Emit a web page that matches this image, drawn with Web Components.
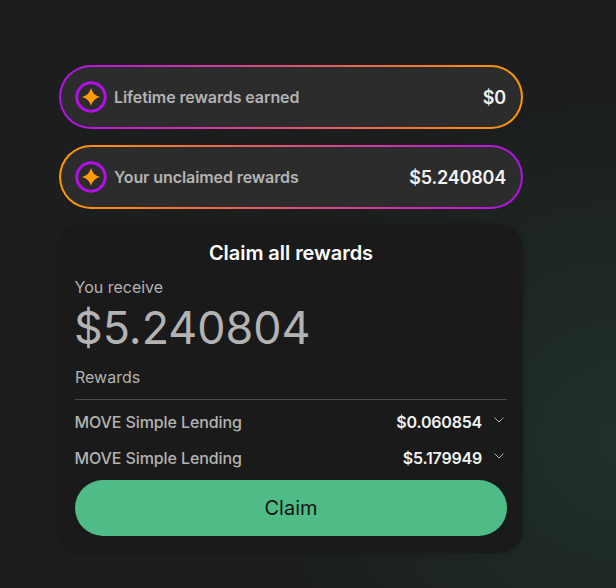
<!DOCTYPE html>
<html lang="en">
<head>
<meta charset="utf-8">
<title>Rewards</title>
<style>
  html, body { margin: 0; height: 100%; }
  body {
    min-height: 588px;
    overflow: hidden;
    font-family: Inter, "Liberation Sans", sans-serif;
    background:
      radial-gradient(circle at 100% 75%, #20302a 0, rgba(32,48,42,0) 45%),
      #1b1e1d;
  }
  rewards-page { padding: 65px 0 0 59px; }
</style>
</head>
<body>
<rewards-page>
  <reward-pill label="Lifetime rewards earned" value="$0" flip></reward-pill>
  <reward-pill label="Your unclaimed rewards" value="$5.240804"></reward-pill>
  <claim-card title="Claim all rewards" amount="$5.240804">
    <reward-row name="MOVE Simple Lending" value="$0.060854"></reward-row>
    <reward-row name="MOVE Simple Lending" value="$5.179949"></reward-row>
  </claim-card>
</rewards-page>

<script>
const pageTemplate = document.createElement('template');
pageTemplate.innerHTML = `
<style>
  :host { display: flex; flex-direction: column; gap: 16px; width: 464px; }
</style>
<slot></slot>`;

class RewardsPage extends HTMLElement {
  connectedCallback() {
    this.attachShadow({ mode: 'open' }).appendChild(pageTemplate.content.cloneNode(true));
  }
}

const pillTemplate = document.createElement('template');
pillTemplate.innerHTML = `
<style>
  :host {
    --a: #ff9900;
    --b: #b30fea;
    display: flex;
    align-items: center;
    box-sizing: border-box;
    height: 64px;
    padding: 0 15px 0 14px;
    gap: 7px;
    border: 2px solid transparent;
    border-radius: 32px;
    background:
      linear-gradient(#2c2c2c, #2c2c2c) padding-box,
      linear-gradient(90deg, var(--a), var(--b)) border-box;
  }
  :host([flip]) { --a: #b30fea; --b: #ff9900; }
  svg { width: 32px; height: 32px; flex: none; }
  .label { flex: 1; font-size: 16px; font-weight: 600; letter-spacing: -.09px; color: #b3b3b3; }
  .value { font-size: 18px; font-weight: 600; letter-spacing: -.2px; color: #f2f2f2; }
</style>
<svg viewBox="0 0 32 32" fill="none">
  <circle cx="16" cy="16" r="14.2" stroke="#b30fea" stroke-width="3"/>
  <path d="M16 7Q17.8 14.2 25 16Q17.8 17.8 16 25Q14.2 17.8 7 16Q14.2 14.2 16 7Z" fill="#ff9900"/>
</svg>
<span class="label"></span>
<span class="value"></span>`;

class RewardPill extends HTMLElement {
  connectedCallback() {
    const root = this.attachShadow({ mode: 'open' });
    root.appendChild(pillTemplate.content.cloneNode(true));
    root.querySelector('.label').textContent = this.getAttribute('label');
    root.querySelector('.value').textContent = this.getAttribute('value');
  }
}

const cardTemplate = document.createElement('template');
cardTemplate.innerHTML = `
<style>
  :host {
    display: flex;
    flex-direction: column;
    box-sizing: border-box;
    height: 328px;
    padding: 16px;
    border-radius: 24px;
    background: #1a1a1a;
    box-shadow: 0 0 6px rgba(0,0,0,.2);
    color: #b3b3b3;
  }
  h2 {
    margin: 0;
    height: 24px;
    line-height: 24px;
    font-size: 20px;
    font-weight: 600;
    letter-spacing: -.05px;
    text-align: center;
    color: #fff;
  }
  .small { font-size: 16px; line-height: 20px; margin-left: -.5px; }
  .receive { margin-top: 12px; }
  .amount { font-size: 44.8px; line-height: 56px; margin: 3px 0 0 -1px; color: #b3b3b3; }
  .rewards { margin-top: 11px; padding-bottom: 12px; border-bottom: 1px solid #4a4a4a; margin-left: 0; }
  .list { display: flex; flex-direction: column; margin-top: 4px; }
  button {
    margin-top: 4px;
    height: 56px;
    border: 0;
    border-radius: 28px;
    background: #4fbb87;
    color: #141414;
    font: 400 20px Inter, "Liberation Sans", sans-serif;
  }
</style>
<h2></h2>
<div class="small receive">You receive</div>
<div class="amount"></div>
<div class="small rewards">Rewards</div>
<div class="list"><slot></slot></div>
<button type="button">Claim</button>`;

class ClaimCard extends HTMLElement {
  connectedCallback() {
    const root = this.attachShadow({ mode: 'open' });
    root.appendChild(cardTemplate.content.cloneNode(true));
    root.querySelector('h2').textContent = this.getAttribute('title');
    root.querySelector('.amount').textContent = this.getAttribute('amount');
  }
}

const rowTemplate = document.createElement('template');
rowTemplate.innerHTML = `
<style>
  :host {
    display: flex;
    align-items: center;
    height: 36px;
    font-size: 16px;
    color: #b3b3b3;
  }
  .name { flex: 1; font-weight: 500; letter-spacing: -.1px; margin-left: -.5px; }
  .value { font-weight: 600; letter-spacing: -.2px; color: #f2f2f2; }
  svg { width: 10px; height: 6px; margin: 0 3px 4px 12px; flex: none; }
</style>
<span class="name"></span>
<span class="value"></span>
<svg viewBox="0 0 10 6" fill="none"><path d="M.6.6 5 5l4.4-4.4" stroke="#b3b3b3" stroke-width="1"/></svg>`;

class RewardRow extends HTMLElement {
  connectedCallback() {
    const root = this.attachShadow({ mode: 'open' });
    root.appendChild(rowTemplate.content.cloneNode(true));
    root.querySelector('.name').textContent = this.getAttribute('name');
    root.querySelector('.value').textContent = this.getAttribute('value');
  }
}

customElements.define('rewards-page', RewardsPage);
customElements.define('reward-pill', RewardPill);
customElements.define('claim-card', ClaimCard);
customElements.define('reward-row', RewardRow);
</script>
</body>
</html>
